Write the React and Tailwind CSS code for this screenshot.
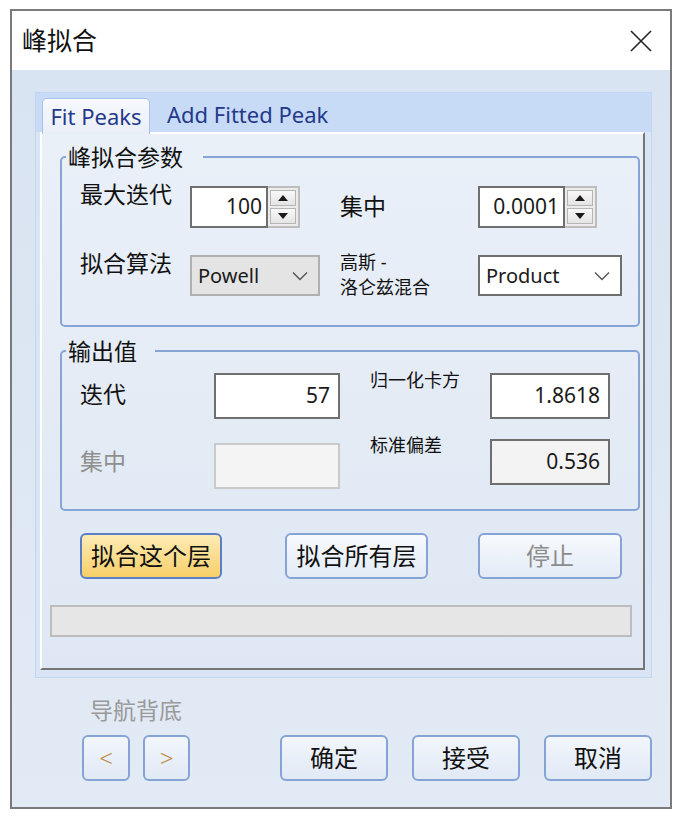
import React from "react";

const Tri = ({ up }) => (
  <svg width="10" height="6" viewBox="0 0 10 6">
    <path d={up ? "M0 6 L5 0 L10 6Z" : "M0 0 L5 6 L10 0Z"} fill="#1a1a1a" />
  </svg>
);

const Chevron = () => (
  <svg width="16" height="10" viewBox="0 0 16 10">
    <polyline points="1,1.5 8,8.5 15,1.5" fill="none" stroke="#555" strokeWidth="1.4" />
  </svg>
);

const Spin = ({ value, className }) => (
  <div className={`flex h-[42px] ${className}`}>
    <div className="flex-1 bg-white border-2 border-[#6f6f6f] flex items-center justify-end pr-[4px] text-[21px] text-[#1a1a1a]">
      {value}
    </div>
    <div className="w-[32px] flex flex-col bg-[#ececec] border-2 border-l-0 border-[#bdbdbd] p-[2px] gap-[2px]">
      <div className="flex-1 border border-[#b5b5b5] bg-linear-to-b from-[#f8f8f8] to-[#e4e4e4] flex items-center justify-center">
        <Tri up />
      </div>
      <div className="flex-1 border border-[#b5b5b5] bg-linear-to-b from-[#f8f8f8] to-[#e4e4e4] flex items-center justify-center">
        <Tri />
      </div>
    </div>
  </div>
);

const Combo = ({ value, className }) => (
  <div className={`h-[41px] flex items-center justify-between pl-[6px] pr-[10px] text-[20px] text-[#1a1a1a] ${className}`}>
    <span>{value}</span>
    <Chevron />
  </div>
);

const Box = ({ value, className }) => (
  <div className={`h-[46px] flex items-center justify-end pr-[8px] text-[21px] text-[#1a1a1a] ${className}`}>
    {value}
  </div>
);

const Btn = ({ children, className = "" }) => (
  <button className={`h-[46px] rounded-[6px] border-2 text-[24px] leading-none ${className}`}>
    {children}
  </button>
);

export default function App() {
  return (
    <div className="w-[680px] h-[820px] bg-white pt-[9px] pl-[10px] font-['Noto_Sans','Noto_Sans_CJK_SC',sans-serif]">
      <div className="w-[662px] h-[800px] border-2 border-[#7a7a7a] flex flex-col">
        {/* title bar */}
        <div className="h-[59px] bg-white flex items-center justify-between pl-[10px] pr-[17px]">
          <span className="text-[25px] text-[#111] leading-none">峰拟合</span>
          <svg width="24" height="24" viewBox="0 0 24 24">
            <path d="M2 2 L22 22 M22 2 L2 22" stroke="#222" strokeWidth="1.6" />
          </svg>
        </div>

        <div className="flex-1 bg-linear-to-b from-[#d9e4f2] to-[#e2eaf5] flex flex-col">
          {/* tab frame */}
          <div className="ml-[23px] mt-[22px] w-[617px] h-[586px] bg-[#d9e5f4] border border-[#c3d6ef] flex flex-col">
            <div className="h-[39px] bg-[#c7dbf7] flex items-end pl-[6px] gap-[17px]">
              <div className="relative z-10 -mb-[2px] h-[36px] w-[108px] rounded-t-[5px] border border-b-0 border-[#a9c3e8] bg-linear-to-b from-[#f7f9fd] to-[#e9eff8] flex items-center justify-center text-[22px] text-[#24398a]">
                Fit Peaks
              </div>
              <div className="h-[35px] flex items-center text-[22px] text-[#24398a]">Add Fitted Peak</div>
            </div>

            <div className="flex-1 pl-[4px] pr-[6px] pb-[7px] flex">
              <div className="flex-1 border-2 border-t-white border-l-white border-r-[#767676] border-b-[#767676] bg-linear-to-b from-[#eaf0f8] to-[#dee7f3] flex flex-col">
                {/* group 1 */}
                <fieldset className="ml-[18px] mt-[9px] w-[580px] border-2 border-[#86a4d6] rounded-[5px]">
                  <legend className="ml-[4px] pl-[2px] pr-[20px] text-[23px] leading-[28px] text-[#111]">峰拟合参数</legend>
                  <div className="pt-[15px] pb-[25px] pl-[18px] flex flex-col gap-[27px]">
                    <div className="flex items-start">
                      <div className="w-[110px] -mt-[6px] text-[23px] leading-[28px] text-[#111]">最大迭代</div>
                      <Spin value="100" className="w-[110px]" />
                      <div className="w-[40px]" />
                      <div className="w-[138px] mt-[6px] text-[23px] leading-[28px] text-[#111]">集中</div>
                      <Spin value="0.0001" className="w-[119px]" />
                    </div>
                    <div className="flex items-start">
                      <div className="w-[110px] -mt-[6px] text-[23px] leading-[28px] text-[#111]">拟合算法</div>
                      <Combo value="Powell" className="w-[130px] bg-[#e4e4e4] border-2 border-[#b0b0b0]" />
                      <div className="w-[20px]" />
                      <div className="w-[138px] -mt-[5px] text-[18px] leading-[25px] text-[#111]">
                        高斯 -<br />洛仑兹混合
                      </div>
                      <Combo value="Product" className="w-[144px] bg-white border-2 border-[#6f6f6f]" />
                    </div>
                  </div>
                </fieldset>

                {/* group 2 */}
                <fieldset className="ml-[18px] mt-[10px] w-[580px] border-2 border-[#86a4d6] rounded-[5px]">
                  <legend className="ml-[4px] pl-[2px] pr-[18px] text-[23px] leading-[28px] text-[#111]">输出值</legend>
                  <div className="pt-[8px] pb-[20px] pl-[18px] flex flex-col gap-[20px]">
                    <div className="flex items-start">
                      <div className="w-[134px] mt-[7px] text-[23px] leading-[28px] text-[#111]">迭代</div>
                      <Box value="57" className="w-[126px] bg-white border-2 border-[#6f6f6f]" />
                      <div className="w-[30px]" />
                      <div className="w-[120px] -mt-[5px] text-[18px] leading-[25px] text-[#111]">归一化卡方</div>
                      <Box value="1.8618" className="w-[120px] bg-white border-2 border-[#6f6f6f]" />
                    </div>
                    <div className="flex items-start">
                      <div className="w-[134px] mt-[8px] text-[23px] leading-[28px] text-[#8f8f8f]">集中</div>
                      <Box value="" className="w-[126px] mt-[4px] bg-[#f4f4f4] border-2 border-[#cacaca]" />
                      <div className="w-[30px]" />
                      <div className="w-[120px] -mt-[6px] text-[18px] leading-[25px] text-[#111]">标准偏差</div>
                      <Box value="0.536" className="w-[120px] bg-[#f3f3f3] border-2 border-[#6f6f6f]" />
                    </div>
                  </div>
                </fieldset>

                {/* action buttons */}
                <div className="mt-[22px] ml-[38px] flex">
                  <Btn className="w-[142px] border-[#5b7fc4] bg-linear-to-b from-[#feebb4] to-[#f8cf67] text-[#111]">拟合这个层</Btn>
                  <Btn className="ml-[63px] w-[143px] border-[#86a3d6] bg-linear-to-b from-[#f7fafd] to-[#e3ebf6] text-[#111]">拟合所有层</Btn>
                  <Btn className="ml-[50px] w-[144px] border-[#86a3d6] bg-linear-to-b from-[#f7fafd] to-[#e3ebf6] text-[#8c8c8c]">停止</Btn>
                </div>

                {/* progress */}
                <div className="mt-[26px] ml-[8px] w-[582px] h-[32px] bg-[#e6e6e6] border-2 border-[#bdbdbd]" />
              </div>
            </div>
          </div>

          {/* bottom */}
          <div className="flex items-end">
            <div className="ml-[70px] flex flex-col">
              <div className="ml-[8px] mt-[18px] text-[23px] leading-[28px] text-[#9a9a9a]">导航背底</div>
              <div className="mt-[11px] flex gap-[13px]">
                <Btn className="w-[48px] h-[45px] border-[#86a3d6] bg-linear-to-b from-[#f2f6fc] to-[#e1e9f5] text-[#c08a4a] font-light">&lt;</Btn>
                <Btn className="w-[47px] h-[45px] border-[#86a3d6] bg-linear-to-b from-[#f2f6fc] to-[#e1e9f5] text-[#c08a4a] font-light">&gt;</Btn>
              </div>
            </div>
            <div className="ml-[90px] flex gap-[24px]">
              <Btn className="w-[108px] h-[45px] border-[#86a3d6] bg-linear-to-b from-[#f2f6fc] to-[#e1e9f5] text-[#111]">确定</Btn>
              <Btn className="w-[108px] h-[45px] border-[#86a3d6] bg-linear-to-b from-[#f2f6fc] to-[#e1e9f5] text-[#111]">接受</Btn>
              <Btn className="w-[108px] h-[45px] border-[#86a3d6] bg-linear-to-b from-[#f2f6fc] to-[#e1e9f5] text-[#111]">取消</Btn>
            </div>
          </div>
        </div>
      </div>
    </div>
  );
}
